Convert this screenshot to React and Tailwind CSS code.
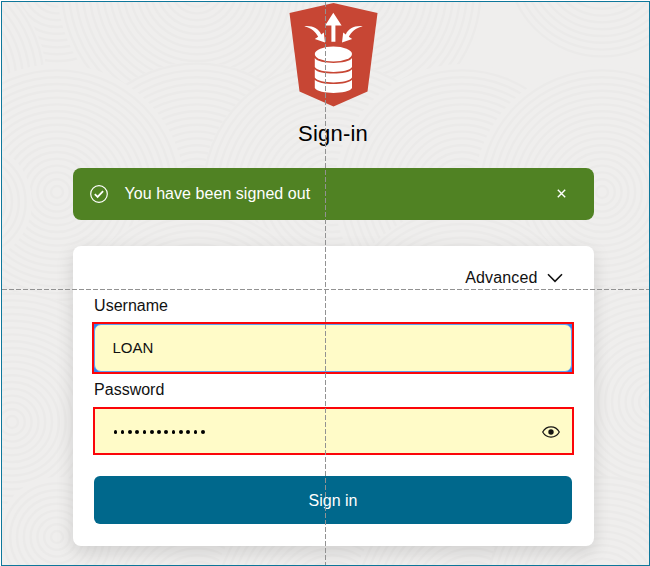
import React from "react";

const rings = Array.from({ length: 21 }, (_, i) => 6 + i * 6.8);

// Later discs cover earlier ones, giving the interlocking wave texture.
const discs = [
  [55, -15, 80], [-80, 80, 125], [350, -10, 132], [600, -40, 100], [195, -15, 140],
  [195, 190, 130], [330, 190, 130], [460, 190, 128], [55, 190, 128], [600, 190, 128],
  [-30, 200, 60], [10, 420, 130], [195, 330, 125], [460, 330, 125], [650, 400, 125],
  [195, 600, 120], [330, 600, 120], [470, 600, 120], [600, 590, 115], [55, 535, 60],
];

function Backdrop() {
  return (
    <svg className="absolute inset-0 h-full w-full" viewBox="0 0 647 563" preserveAspectRatio="none" aria-hidden="true">
      {discs.map(([x, y, r], i) => (
        <g key={i}>
          <circle cx={x} cy={y} r={r} fill="#efeeed" />
          {rings.filter((n) => n <= r).map((n) => (
            <circle key={n} cx={x} cy={y} r={n} fill="none" stroke="#ebeae9" strokeWidth="2.4" />
          ))}
        </g>
      ))}
    </svg>
  );
}

function Logo() {
  return (
    <svg width="89" height="106" viewBox="0 0 89 106" className="shrink-0">
      <path d="M44.5 1 88.5 11 78.5 89.5 44.5 104.6 10.5 89.5 0.5 11Z" fill="#c74634" />
      <g fill="#fff">
        <path d="M44.3 10.7 52.6 23.4H46.4V39.7H42.4V23.4H36.2Z" />
        <path d="M15.3 24.2C23.5 23.4 30 26.8 32.2 32.4L34.8 30.4 36 40.5 25.8 37 29.2 34.8C26.5 29.8 22.5 26 15.3 24.2Z" />
        <path d="M73.7 24.2C65.5 23.4 59 26.8 56.8 32.4L54.2 30.4 53 40.5 63.2 37 59.8 34.8C62.5 29.8 66.5 26 73.7 24.2Z" />
        <ellipse cx="44.4" cy="52" rx="18.6" ry="7.6" />
        <path d="M25.8 56C30 62.5 59 62.5 63 56V65C59 71.5 30 71.5 25.8 65Z" />
        <path d="M25.8 67.2C30 73 59 73 63 67.2V75.5C59 82 30 82 25.8 75.5Z" />
        <path d="M25.8 77.8C30 83.5 59 83.5 63 77.8V86C59 92.5 30 92.5 25.8 86Z" />
      </g>
    </svg>
  );
}

export default function App() {
  return (
    <div className="h-[566px] w-[650px] overflow-hidden bg-white pl-px pt-px font-['Liberation_Sans',Arial,sans-serif] text-[16px] leading-[20px] text-[#111]">
      <main className="relative h-[565px] w-[649px] border border-[#0e779b] bg-[#efeeed]">
        <Backdrop />
        <div className="relative flex flex-col items-center pl-[15px]">
          <Logo />
          <h1 className="mt-[12px] h-[28px] text-[22px] leading-[28px] tracking-[0.2px] text-black">Sign-in</h1>
          <div className="mt-[20px] flex h-[52px] w-[521px] items-center rounded-[8px] bg-[#508223] pl-[17px] pr-[28px] text-white">
            <svg width="18" height="18" viewBox="0 0 18 18" fill="none" stroke="currentColor">
              <circle cx="9" cy="9" r="8.3" strokeWidth="1.2" />
              <path d="m4.8 9.2 2.8 2.7 5.5-5.7" strokeWidth="1.8" />
            </svg>
            <span className="ml-[17px] flex-1 tracking-[0.05px]">You have been signed out</span>
            <svg className="-mt-px" width="9" height="9" viewBox="0 0 9 9" stroke="currentColor" strokeWidth="1.4">
              <path d="m.8.8 7.4 7.4M8.2.8.8 8.2" />
            </svg>
          </div>
          <form className="mt-[26px] flex h-[300px] w-[521px] flex-col rounded-[8px] bg-white px-[21px] pt-[22px] shadow-[0_6px_18px_rgba(0,0,0,0.13)]">
            <div className="flex h-[20px] items-center justify-end pr-[10px]">
              <span className="tracking-[0.15px]">Advanced</span>
              <svg className="ml-[9px]" width="16" height="10" viewBox="0 0 16 10" fill="none" stroke="currentColor" strokeWidth="1.6">
                <path d="m1 1.3 7 7 7-7" />
              </svg>
            </div>
            <label className="mt-[8px] h-[20px] pl-[0.6px]">Username</label>
            <div className="-ml-[2px] mt-[6px] h-[52px] w-[482px] border-2 border-[#fb0509] bg-[#2f83f0] shadow-[0_-1px_0_-2px_#8fb5f0]">
              <div className="flex h-[48px] items-center rounded-[7px] border border-[#5f9ff0] bg-[#fffbc8] pl-[18px] text-[15px] leading-[18px]"><span className="-mt-px">LOAN</span></div>
            </div>
            <label className="mt-[6px] h-[20px] pl-[0.6px]">Password</label>
            <div className="-ml-px mt-[7px] flex h-[48px] w-[481px] items-center border-2 border-[#fb0509] bg-[#fffbc8] pl-[19px] pr-[12px]">
              <div className="flex flex-1 gap-[3.6px] pt-[2px]">
                {Array.from({ length: 13 }, (_, i) => <span key={i} className="h-[3.7px] w-[3.7px] rounded-full bg-black" />)}
              </div>
              <svg className="mt-[2px]" width="18" height="12" viewBox="0 0 18 12">
                <path d="M.7 6C4.5-.8 13.5-.8 17.3 6 13.5 12.8 4.5 12.8.7 6Z" fill="none" stroke="#161513" strokeWidth="1.2" />
                <circle cx="9" cy="6" r="2.7" fill="#161513" />
              </svg>
            </div>
            <button type="button" className="mt-[21px] h-[48px] w-[478px] rounded-[6px] bg-[#00688c] pl-px pt-[2px] text-white">Sign in</button>
          </form>
        </div>
        <div className="absolute left-[323px] top-0 h-full w-px bg-[repeating-linear-gradient(to_bottom,#929292_0_5px,transparent_5px_7px)]" />
        <div className="absolute left-0 top-[287px] h-px w-full bg-[repeating-linear-gradient(to_right,#929292_0_5px,transparent_5px_7px)]" />
      </main>
    </div>
  );
}
